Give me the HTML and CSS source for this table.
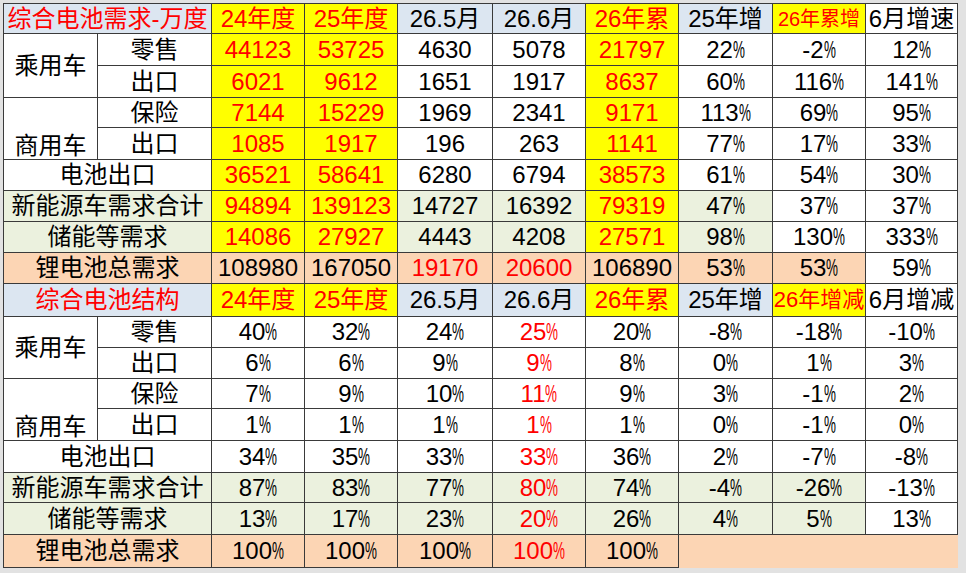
FILE: index.html
```html
<!DOCTYPE html>
<html lang="zh">
<head>
<meta charset="utf-8">
<title>综合电池需求</title>
<link rel="stylesheet" href="styles.css">
</head>
<body>
<table class="sheet">
  <colgroup>
    <col class="c94"><col class="c114"><col class="c93"><col class="c93"><col class="c95"><col class="c93"><col class="c93"><col class="c94"><col class="c93"><col class="c92">
  </colgroup>
  <tbody>
    <tr class="h30">
      <td colspan="2" class="b r">综合电池需求-万度</td>
      <td class="y r">24年度</td><td class="y r">25年度</td>
      <td class="b">26.5月</td><td class="b">26.6月</td>
      <td class="y r">26年累</td><td class="b">25年增</td>
      <td class="y r sm">26年累增</td><td>6月增速</td>
    </tr>
    <tr class="h32">
      <td rowspan="2">乘用车</td><td>零售</td>
      <td class="y r">44123</td><td class="y r">53725</td><td>4630</td><td>5078</td><td class="y r">21797</td>
      <td>22<span class="pc">%</span></td><td>-2<span class="pc">%</span></td><td>12<span class="pc">%</span></td>
    </tr>
    <tr class="h32">
      <td>出口</td>
      <td class="y r">6021</td><td class="y r">9612</td><td>1651</td><td>1917</td><td class="y r">8637</td>
      <td>60<span class="pc">%</span></td><td>116<span class="pc">%</span></td><td>141<span class="pc">%</span></td>
    </tr>
    <tr class="h30">
      <td rowspan="2" class="bot">商用车</td><td>保险</td>
      <td class="y r">7144</td><td class="y r">15229</td><td>1969</td><td>2341</td><td class="y r">9171</td>
      <td>113<span class="pc">%</span></td><td>69<span class="pc">%</span></td><td>95<span class="pc">%</span></td>
    </tr>
    <tr class="h32">
      <td>出口</td>
      <td class="y r">1085</td><td class="y r">1917</td><td>196</td><td>263</td><td class="y r">1141</td>
      <td>77<span class="pc">%</span></td><td>17<span class="pc">%</span></td><td>33<span class="pc">%</span></td>
    </tr>
    <tr class="h31">
      <td colspan="2">电池出口</td>
      <td class="y r">36521</td><td class="y r">58641</td><td>6280</td><td>6794</td><td class="y r">38573</td>
      <td>61<span class="pc">%</span></td><td>54<span class="pc">%</span></td><td>30<span class="pc">%</span></td>
    </tr>
    <tr class="h31">
      <td colspan="2" class="g">新能源车需求合计</td>
      <td class="y r">94894</td><td class="y r">139123</td><td class="g">14727</td><td class="g">16392</td><td class="y r">79319</td>
      <td class="g">47<span class="pc">%</span></td><td>37<span class="pc">%</span></td><td>37<span class="pc">%</span></td>
    </tr>
    <tr class="h31">
      <td colspan="2" class="g">储能等需求</td>
      <td class="y r">14086</td><td class="y r">27927</td><td class="g">4443</td><td class="g">4208</td><td class="y r">27571</td>
      <td class="g">98<span class="pc">%</span></td><td>130<span class="pc">%</span></td><td>333<span class="pc">%</span></td>
    </tr>
    <tr class="h31">
      <td colspan="2" class="p">锂电池总需求</td>
      <td class="p">108980</td><td class="p">167050</td><td class="p r">19170</td><td class="p r">20600</td><td class="p">106890</td>
      <td class="p">53<span class="pc">%</span></td><td class="p">53<span class="pc">%</span></td><td>59<span class="pc">%</span></td>
    </tr>

    <tr class="h33">
      <td colspan="2" class="b r">综合电池结构</td>
      <td class="y r">24年度</td><td class="y r">25年度</td>
      <td class="b">26.5月</td><td class="b">26.6月</td>
      <td class="y r">26年累</td><td class="b">25年增</td>
      <td class="y r md">26年增减</td><td>6月增减</td>
    </tr>
    <tr class="h31">
      <td rowspan="2">乘用车</td><td>零售</td>
      <td>40<span class="pc">%</span></td><td>32<span class="pc">%</span></td><td>24<span class="pc">%</span></td><td class="r">25<span class="pc">%</span></td><td>20<span class="pc">%</span></td>
      <td>-8<span class="pc">%</span></td><td>-18<span class="pc">%</span></td><td>-10<span class="pc">%</span></td>
    </tr>
    <tr class="h31">
      <td>出口</td>
      <td>6<span class="pc">%</span></td><td>6<span class="pc">%</span></td><td>9<span class="pc">%</span></td><td class="r">9<span class="pc">%</span></td><td>8<span class="pc">%</span></td>
      <td>0<span class="pc">%</span></td><td>1<span class="pc">%</span></td><td>3<span class="pc">%</span></td>
    </tr>
    <tr class="h30">
      <td rowspan="2" class="bot">商用车</td><td>保险</td>
      <td>7<span class="pc">%</span></td><td>9<span class="pc">%</span></td><td>10<span class="pc">%</span></td><td class="r">11<span class="pc">%</span></td><td>9<span class="pc">%</span></td>
      <td>3<span class="pc">%</span></td><td>-1<span class="pc">%</span></td><td>2<span class="pc">%</span></td>
    </tr>
    <tr class="h32">
      <td>出口</td>
      <td>1<span class="pc">%</span></td><td>1<span class="pc">%</span></td><td>1<span class="pc">%</span></td><td class="r">1<span class="pc">%</span></td><td>1<span class="pc">%</span></td>
      <td>0<span class="pc">%</span></td><td>-1<span class="pc">%</span></td><td>0<span class="pc">%</span></td>
    </tr>
    <tr class="h32">
      <td colspan="2">电池出口</td>
      <td>34<span class="pc">%</span></td><td>35<span class="pc">%</span></td><td>33<span class="pc">%</span></td><td class="r">33<span class="pc">%</span></td><td>36<span class="pc">%</span></td>
      <td>2<span class="pc">%</span></td><td>-7<span class="pc">%</span></td><td>-8<span class="pc">%</span></td>
    </tr>
    <tr class="h30">
      <td colspan="2" class="g">新能源车需求合计</td>
      <td class="g">87<span class="pc">%</span></td><td class="g">83<span class="pc">%</span></td><td class="g">77<span class="pc">%</span></td><td class="g r">80<span class="pc">%</span></td><td class="g">74<span class="pc">%</span></td>
      <td class="g">-4<span class="pc">%</span></td><td class="g">-26<span class="pc">%</span></td><td>-13<span class="pc">%</span></td>
    </tr>
    <tr class="h32">
      <td colspan="2" class="g">储能等需求</td>
      <td class="g">13<span class="pc">%</span></td><td class="g">17<span class="pc">%</span></td><td class="g">23<span class="pc">%</span></td><td class="g r">20<span class="pc">%</span></td><td class="g">26<span class="pc">%</span></td>
      <td class="g">4<span class="pc">%</span></td><td class="g">5<span class="pc">%</span></td><td>13<span class="pc">%</span></td>
    </tr>
    <tr class="h33">
      <td colspan="2" class="p">锂电池总需求</td>
      <td class="p">100<span class="pc">%</span></td><td class="p">100<span class="pc">%</span></td><td class="p">100<span class="pc">%</span></td><td class="p r">100<span class="pc">%</span></td><td class="p">100<span class="pc">%</span></td>
      <td colspan="4" class="p open"></td>
    </tr>
  </tbody>
</table>
</body>
</html>
```

FILE: styles.css
```css
html, body {
  margin: 0;
  background: #e2e2e2;
}
body {
  box-sizing: border-box;
  height: 573px;
  overflow: hidden;
  padding: 3px 0 0 3px;
}
.sheet {
  border-collapse: collapse;
  table-layout: fixed;
  width: 955px;
  background: #ffffff;
  font-family: "Liberation Sans", "Noto Sans CJK SC", sans-serif;
  font-size: 24px;
  color: #000000;
}
.c92 { width: 92px; }
.c93 { width: 93px; }
.c94 { width: 94px; }
.c95 { width: 95px; }
.c114 { width: 114px; }
.h30 { height: 30px; }
.h31 { height: 31px; }
.h32 { height: 32px; }
.h33 { height: 33px; }
.sheet td {
  border: 1px solid #3a3a3a;
  padding: 0;
  text-align: center;
  vertical-align: middle;
  line-height: 26px;
  white-space: nowrap;
  overflow: hidden;
}
.sheet td.bot { vertical-align: bottom; }
.sheet td.y { background: #ffff00; }
.sheet td.b { background: #dce6f1; }
.sheet td.g { background: #ebf1de; }
.sheet td.p { background: #fcd5b4; }
.sheet td.r { color: #ff0000; }
.sheet td.sm { font-size: 20px; }
.sheet td.md { font-size: 22px; }
.sheet td.open {
  border-right: none;
  border-bottom: none;
}
.pc {
  display: inline-block;
  transform: scaleX(0.56);
  transform-origin: left center;
  margin-right: -9.4px;
}
```
